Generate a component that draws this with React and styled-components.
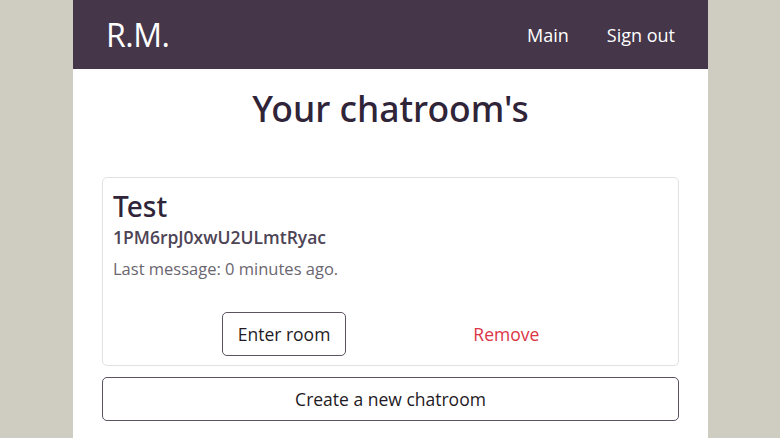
import React from "react";
import styled, { createGlobalStyle } from "styled-components";

const GlobalStyle = createGlobalStyle`
	html, body {
		margin: 0;
		padding: 0;
		background: #cfcdc1;
		font-family: "Open Sans", "Noto Sans", sans-serif;
	}
	* {
		box-sizing: border-box;
	}
`;

const Page = styled.div`
	width: 635px;
	min-height: 438px;
	margin: 0 0 0 73px;
	background: #ffffff;
`;

const Navbar = styled.nav`
	height: 69px;
	background: #45364a;
	display: flex;
	align-items: center;
	justify-content: space-between;
	padding: 0 33px 0 33px;
`;

const Brand = styled.a`
	color: #ffffff;
	font-size: 32px;
	font-weight: 400;
	letter-spacing: -0.5px;
`;

const NavLinks = styled.div`
	display: flex;
	gap: 38px;
`;

const NavLink = styled.a`
	color: #ffffff;
	font-size: 18px;
`;

const Title = styled.h1`
	margin: 14px 0 0;
	text-align: center;
	color: #2f2438;
	font-family: "Noto Sans", "Open Sans", sans-serif;
	font-size: 35.5px;
	font-weight: 500;
	line-height: 50px;
`;

const Content = styled.div`
	padding: 44px 29px 0;
	display: flex;
	flex-direction: column;
	gap: 11px;
`;

const Card = styled.div`
	border: 1px solid #e2e2e2;
	border-radius: 5px;
	padding: 9px 10px 9px;
`;

const RoomName = styled.h2`
	margin: 0;
	color: #2f2438;
	font-family: "Noto Sans", "Open Sans", sans-serif;
	font-size: 28px;
	font-weight: 500;
	line-height: 38px;
`;

const RoomId = styled.div`
	color: #4d4455;
	font-size: 17.5px;
	font-weight: 600;
	line-height: 24px;
`;

const LastMessage = styled.p`
	margin: 8px 0 0;
	color: #6a6670;
	font-size: 16.5px;
	line-height: 24px;
`;

const Actions = styled.div`
	display: flex;
	align-items: center;
	justify-content: center;
	gap: 111px;
	margin-top: 31px;
	padding-right: 4px;
`;

const Button = styled.button`
	font-family: inherit;
	font-size: 17.5px;
	background: transparent;
	border: ${(p) => (p.$link ? "1px solid transparent" : "1px solid #5b5262")};
	border-radius: 5px;
	color: ${(p) => (p.$link ? "#dc3545" : "#1f1a24")};
	height: 44px;
	padding: 0 15px;
	width: ${(p) => (p.$wide ? "100%" : "auto")};
	cursor: pointer;
`;

const App = () => {
	return (
		<>
			<GlobalStyle />
			<Page>
				<Navbar>
					<Brand>R.M.</Brand>
					<NavLinks>
						<NavLink>Main</NavLink>
						<NavLink>Sign out</NavLink>
					</NavLinks>
				</Navbar>
				<Title>Your chatroom's</Title>
				<Content>
					<Card>
						<RoomName>Test</RoomName>
						<RoomId>1PM6rpJ0xwU2ULmtRyac</RoomId>
						<LastMessage>Last message: 0 minutes ago.</LastMessage>
						<Actions>
							<Button>Enter room</Button>
							<Button $link>Remove</Button>
						</Actions>
					</Card>
					<Button $wide>Create a new chatroom</Button>
				</Content>
			</Page>
		</>
	);
};

export default App;
